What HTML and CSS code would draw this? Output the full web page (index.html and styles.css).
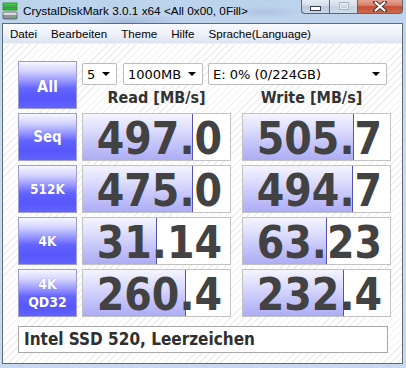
FILE: index.html
```html
<!DOCTYPE html>
<html>
<head>
<meta charset="utf-8">
<link rel="stylesheet" href="styles.css">
</head>
<body>
<div class="window">
  <div class="titlebar">
    <svg class="appicon" width="16" height="18" viewBox="0 0 16 18">
      <rect x="1" y="1" width="14" height="3" fill="#3fd23f" stroke="#1e8a1e" stroke-width="0.8"/>
      <rect x="1" y="5" width="14" height="3" fill="#2cb82c" stroke="#1e8a1e" stroke-width="0.8"/>
      <rect x="1" y="10" width="14" height="7" rx="1" fill="#8e9498" stroke="#4d5358" stroke-width="0.8"/>
      <rect x="1.5" y="10.5" width="13" height="2.5" fill="#d8dcdf"/>
      <rect x="11" y="13.5" width="2.5" height="2" fill="#3fd23f"/>
    </svg>
    <span class="title">CrystalDiskMark 3.0.1 x64 &lt;All 0x00, 0Fill&gt;</span>
    <div class="caption-buttons">
      <div class="cb cb-min"><span class="glyph-min"></span></div>
      <div class="cb cb-max"><span class="glyph-max"></span></div>
      <div class="cb cb-close">
        <svg width="14" height="11" viewBox="0 0 14 11">
          <path d="M2 1 L12 10 M12 1 L2 10" stroke="#3a3a3a" stroke-width="4" stroke-linecap="round"/>
          <path d="M2.5 1.5 L11.5 9.5 M11.5 1.5 L2.5 9.5" stroke="#ffffff" stroke-width="2.2" stroke-linecap="round"/>
        </svg>
      </div>
    </div>
  </div>
  <div class="frame">
    <div class="menubar">
      <span class="menu-item">Datei</span>
      <span class="menu-item">Bearbeiten</span>
      <span class="menu-item">Theme</span>
      <span class="menu-item">Hilfe</span>
      <span class="menu-item">Sprache(Language)</span>
    </div>
    <div class="client">
      <div class="grid">
        <div class="btn btn-all">All</div>
        <div class="header">
          <div class="selects">
            <div class="select sel-count"><span>5</span><i class="arrow"></i></div>
            <div class="select sel-size"><span>1000MB</span><i class="arrow"></i></div>
            <div class="select sel-drive"><span>E: 0% (0/224GB)</span><i class="arrow"></i></div>
          </div>
          <div class="labels">
            <div class="label">Read [MB/s]</div>
            <div class="label">Write [MB/s]</div>
          </div>
        </div>

        <div class="btn">Seq</div>
        <div class="box read"><div class="fill" style="width:109px"></div><span class="val">497.0</span></div>
        <div class="box write"><div class="fill" style="width:110px"></div><span class="val">505.7</span></div>

        <div class="btn btn-small">512K</div>
        <div class="box read"><div class="fill" style="width:109px"></div><span class="val">475.0</span></div>
        <div class="box write"><div class="fill" style="width:109px"></div><span class="val">494.7</span></div>

        <div class="btn btn-small">4K</div>
        <div class="box read"><div class="fill" style="width:73px"></div><span class="val">31.14</span></div>
        <div class="box write"><div class="fill" style="width:83px"></div><span class="val">63.23</span></div>

        <div class="btn btn-small btn-two">4K<br>QD32</div>
        <div class="box read"><div class="fill" style="width:102px"></div><span class="val">260.4</span></div>
        <div class="box write"><div class="fill" style="width:100px"></div><span class="val">232.4</span></div>
      </div>
      <div class="namebox">Intel SSD 520, Leerzeichen</div>
    </div>
  </div>
</div>
</body>
</html>
```

FILE: styles.css
```css
html, body {
  margin: 0;
  padding: 0;
}

body {
  width: 406px;
  height: 368px;
  overflow: hidden;
  background: #c4d8ee;
}

.window {
  width: 406px;
  height: 368px;
  background:
    radial-gradient(ellipse 60px 8px at 130px 22px, rgba(120,140,190,0.35), rgba(120,140,190,0)),
    radial-gradient(ellipse 40px 6px at 265px 12px, rgba(150,165,200,0.35), rgba(150,165,200,0)),
    linear-gradient(180deg, #bcd3ec 0%, #c9dcf0 40%, #c6d9ee 100%);
  display: flex;
  flex-direction: column;
}

.titlebar {
  height: 23px;
  display: flex;
  align-items: flex-start;
}

.appicon {
  margin: 2px 0 0 2px;
  flex: none;
}

.title {
  margin: 4px 0 0 5px;
  font-family: "Liberation Sans", Arial, sans-serif;
  font-size: 11.8px;
  color: #000;
  line-height: 14px;
  white-space: nowrap;
}

.caption-buttons {
  margin-left: auto;
  margin-right: 3px;
  display: flex;
  height: 15px;
  margin-top: -1px;
}

.cb {
  height: 15px;
  box-sizing: border-box;
  border: 1px solid #5a6676;
  border-top: none;
  display: flex;
  align-items: center;
  justify-content: center;
}

.cb-min {
  width: 28px;
  border-radius: 0 0 0 4px;
  background: linear-gradient(180deg, #e8eef6 0%, #d4dfec 45%, #b9c9dc 55%, #c9d8ea 100%);
  border-right: none;
}

.cb-max {
  width: 28px;
  background: linear-gradient(180deg, #e4ebf4 0%, #d6e0ec 45%, #c4d2e2 55%, #cfdcea 100%);
  border-right: none;
}

.cb-close {
  width: 46px;
  border-radius: 0 0 4px 0;
  background: linear-gradient(180deg, #e7a798 0%, #d9826c 45%, #c44f33 55%, #d06a4e 100%);
}

.glyph-min {
  width: 9px;
  height: 3px;
  background: #fff;
  border: 1px solid #3a3f48;
  margin-top: 4px;
}

.glyph-max {
  width: 8px;
  height: 6px;
  border: 1px solid #a9b4c2;
  box-shadow: inset 0 0 0 1px #e8eef5;
}

.frame {
  margin-left: 2px;
  width: 401px;
  height: 341px;
  box-sizing: border-box;
  border: 1px solid #5c6a7a;
  display: flex;
  flex-direction: column;
  background: #fff;
}

.menubar {
  height: 19px;
  display: flex;
  align-items: center;
  background: linear-gradient(180deg, #f9fbfe 0%, #eef2f9 50%, #dde4f1 100%);
  border-bottom: 1px solid #f0f3f9;
  flex: none;
}

.menu-item {
  font-family: "Liberation Sans", Arial, sans-serif;
  font-size: 11.6px;
  color: #000;
  padding: 0 7px;
  line-height: 15px;
}

.client {
  flex: 1;
  padding: 17px 0 0 15px;
  background-color: #ffffff;
  background-image: repeating-linear-gradient(135deg, #ffffff 0px, #ffffff 4px, #eeeeee 4px, #eeeeee 5px);
}

.grid {
  display: grid;
  grid-template-columns: 59px 155px 149px;
  grid-auto-rows: 48px;
  column-gap: 5px;
  row-gap: 4px;
}

.btn {
  box-sizing: border-box;
  border: 1px solid #9d9dd2;
  background: linear-gradient(180deg, #f6f6ff 0%, #d4d4ff 20%, #9a9aff 40%, #6464ff 58%, #5656fb 80%, #6363ff 100%);
  color: #fff;
  font-family: "DejaVu Sans Condensed", "DejaVu Sans", sans-serif;
  font-stretch: condensed;
  font-weight: bold;
  font-size: 15px;
  display: flex;
  align-items: center;
  justify-content: center;
  text-align: center;
  text-shadow: 0 0 1px rgba(60,60,200,0.6);
}

.btn-all {
  font-size: 16px;
  padding-top: 3px;
}

.btn-small {
  font-size: 13.5px;
}

.btn-two {
  line-height: 18px;
  font-size: 14px;
}

.header {
  grid-column: 2 / span 2;
  display: flex;
  flex-direction: column;
}

.selects {
  display: flex;
  margin-top: 2px;
  height: 22px;
}

.select {
  box-sizing: border-box;
  height: 22px;
  border: 1px solid #bcbcbc;
  border-radius: 2px;
  background: #fff;
  display: flex;
  align-items: center;
  padding-left: 4px;
  font-family: "DejaVu Sans", sans-serif;
  font-size: 13px;
  color: #000;
}

.select span {
  flex: 1;
}

.sel-count {
  width: 35px;
}

.sel-size {
  width: 80px;
  margin-left: 6px;
}

.sel-drive {
  width: 179px;
  margin-left: 5px;
}

.arrow {
  width: 0;
  height: 0;
  border-left: 4px solid transparent;
  border-right: 4px solid transparent;
  border-top: 4px solid #000;
  margin-right: 6px;
}

.labels {
  display: grid;
  grid-template-columns: 149px 149px;
  column-gap: 6px;
  margin-top: 3px;
}

.label {
  text-align: center;
  font-family: "DejaVu Sans Condensed", "DejaVu Sans", sans-serif;
  font-stretch: condensed;
  font-weight: bold;
  font-size: 16px;
  color: #333;
  line-height: 20px;
}

.box {
  position: relative;
  box-sizing: border-box;
  width: 149px;
  border: 1px solid #c2c2c2;
  background: #fff;
  display: flex;
  align-items: center;
  justify-content: flex-end;
  padding: 4px 8px 0 0;
}

.fill {
  position: absolute;
  left: 0;
  top: 0;
  bottom: 0;
  background: linear-gradient(180deg, #f4f4ff 0%, #dcdcfc 35%, #c4c4fa 65%, #acacf4 100%);
  border-right: 1px solid #5252b8;
}

.val {
  position: relative;
  font-family: "DejaVu Sans Condensed", "DejaVu Sans", sans-serif;
  font-stretch: condensed;
  font-weight: bold;
  font-size: 44px;
  color: #424242;
  line-height: 40px;
}

.namebox {
  margin-top: 9px;
  box-sizing: border-box;
  width: 370px;
  height: 27px;
  border: 1px solid #a8a8a8;
  background: #fff;
  padding-left: 5px;
  font-family: "DejaVu Sans Condensed", "DejaVu Sans", sans-serif;
  font-stretch: condensed;
  font-weight: bold;
  font-size: 17px;
  color: #303030;
  line-height: 25px;
}
```
